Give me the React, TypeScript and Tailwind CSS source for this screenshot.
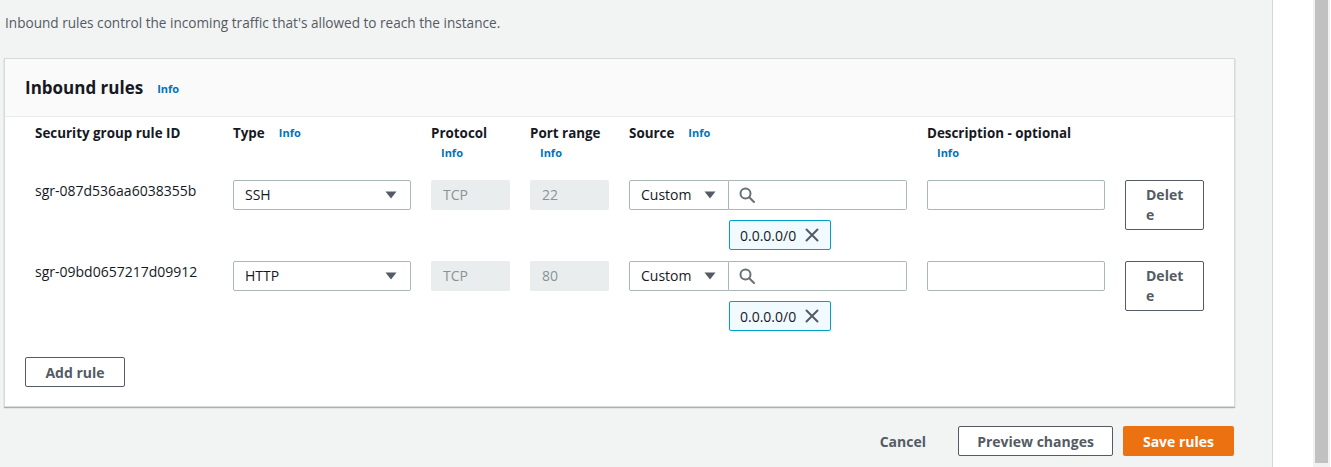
import React from "react";

const font = { fontFamily: '"Open Sans", "Noto Sans", sans-serif' };

const Info = ({ className = "" }: { className?: string }) => (
  <span className={`text-[11px] font-bold text-[#0073bb] ${className}`}>Info</span>
);

const Caret = () => (
  <svg width="12" height="8" viewBox="0 0 12 8" className="shrink-0">
    <path d="M0.5 0.5 H11.5 L6 7.5 Z" fill="#545b64" />
  </svg>
);

const SearchIcon = () => (
  <svg width="16" height="16" viewBox="0 0 16 16" fill="none" stroke="#687078" strokeWidth="2">
    <circle cx="6.5" cy="6.5" r="5" />
    <path d="M10.2 10.2 L15 15" strokeLinecap="round" />
  </svg>
);

const CloseIcon = () => (
  <svg width="14" height="14" viewBox="0 0 14 14" stroke="#545b64" strokeWidth="2" strokeLinecap="round">
    <path d="M1.5 1.5 L12.5 12.5 M12.5 1.5 L1.5 12.5" />
  </svg>
);

type Rule = { id: string; type: string; port: string };

const rules: Rule[] = [
  { id: "sgr-087d536aa6038355b", type: "SSH", port: "22" },
  { id: "sgr-09bd0657217d09912", type: "HTTP", port: "80" },
];

const RuleRow = ({ rule }: { rule: Rule }) => (
  <div className="flex gap-5 text-[14px] text-[#16191f]">
    <div className="w-[178px] leading-[22px]">{rule.id}</div>
    <div className="w-[178px]">
      <div className="h-[30px] border border-[#aab7b8] rounded-[2px] bg-white flex items-center justify-between pl-[11px] pr-[13px] pb-[1px]">
        <span>{rule.type}</span>
        <Caret />
      </div>
    </div>
    <div className="w-[79px] h-[30px] bg-[#eaeded] rounded-[2px] flex items-center pl-[12px] pb-[1px] text-[#879596]">TCP</div>
    <div className="w-[79px] h-[30px] bg-[#eaeded] rounded-[2px] flex items-center pl-[12px] pb-[1px] text-[#879596]">
      {rule.port}
    </div>
    <div className="w-[278px] flex flex-col">
      <div className="flex">
        <div className="w-[100px] h-[30px] border border-[#aab7b8] rounded-l-[2px] bg-white flex items-center justify-between pl-[11px] pr-[12px] pb-[1px]">
          <span>Custom</span>
          <Caret />
        </div>
        <div className="w-[178px] h-[30px] border border-l-0 border-[#aab7b8] rounded-r-[2px] bg-white flex items-center pl-[10px]">
          <SearchIcon />
        </div>
      </div>
      <div className="mt-[10px] ml-[100px] w-[102px] h-[30px] border border-[#00a1c9] rounded-[2px] bg-[#f1faff] flex items-center pl-[10px] gap-[9px]">
        <span>0.0.0.0/0</span>
        <CloseIcon />
      </div>
    </div>
    <div className="w-[178px] h-[30px] border border-[#aab7b8] rounded-[2px] bg-white" />
    <button className="w-[79px] h-[50px] border border-[#545b64] rounded-[2px] bg-white pl-5 pr-4 text-left text-[14px] font-bold text-[#545b64] leading-[20px] break-all">
      Delete
    </button>
  </div>
);

export default function App() {
  return (
    <div className="flex w-[1331px] h-[467px] overflow-hidden" style={font}>
      <div className="w-[1273px] h-full bg-[#f2f3f3] border-r border-[#d5d5d5] shrink-0">
        <p className="pl-[5px] pt-[13px] text-[13.6px] leading-[20px] text-[#545b64]">
          Inbound rules control the incoming traffic that's allowed to reach the instance.
        </p>
        <div className="ml-[4px] mt-[25px] w-[1231px] bg-white border border-[#d5dbdb] shadow-[0_1px_1px_0_rgba(0,28,36,0.3)]">
          <div className="h-[58px] bg-[#fafafa] border-b border-[#eaeded] flex items-center pl-5 gap-[14px]">
            <h2 className="text-[17px] font-bold text-[#16191f]">Inbound rules</h2>
            <Info className="mt-[3px]" />
          </div>
          <div className="pl-[30px] pt-[6px]">
            <div className="flex gap-5 text-[13.4px] font-bold text-[#16191f] leading-[20px] h-[57px]">
              <div className="w-[178px]">Security group rule ID</div>
              <div className="w-[178px] flex gap-[14px]">
                <span>Type</span>
                <Info />
              </div>
              <div className="w-[79px] flex flex-col">
                <span>Protocol</span>
                <Info className="pl-[10px]" />
              </div>
              <div className="w-[79px] flex flex-col">
                <span className="whitespace-nowrap">Port range</span>
                <Info className="pl-[10px]" />
              </div>
              <div className="w-[278px] flex gap-[14px]">
                <span>Source</span>
                <Info />
              </div>
              <div className="w-[178px] flex flex-col">
                <span className="whitespace-nowrap">Description - optional</span>
                <Info className="pl-[10px]" />
              </div>
            </div>
            <div className="flex flex-col gap-[11px]">
              {rules.map((r) => (
                <RuleRow key={r.id} rule={r} />
              ))}
            </div>
          </div>
          <div className="pl-5 pt-[26px] pb-[19px]">
            <button className="w-[100px] h-[30px] border border-[#545b64] rounded-[2px] bg-white text-[14px] font-bold text-[#545b64]">
              Add rule
            </button>
          </div>
        </div>
        <div className="flex justify-end items-center gap-[10px] pr-[38px] mt-[19px]">
          <button className="h-[30px] px-[22px] text-[14px] font-bold text-[#545b64]">Cancel</button>
          <button className="w-[155px] h-[30px] border border-[#545b64] rounded-[2px] bg-white text-[14px] font-bold text-[#545b64]">
            Preview changes
          </button>
          <button className="w-[111px] h-[30px] rounded-[2px] bg-[#ec7211] text-[14px] font-bold text-white">
            Save rules
          </button>
        </div>
      </div>
      <div className="w-[40px] h-full bg-white shrink-0" />
      <div className="w-[17px] h-full bg-[#f1f1f1] shrink-0 pl-[2px] pr-[2px]">
        <div className="w-[13px] h-[463px] bg-[#c1c1c1]" />
      </div>
    </div>
  );
}
